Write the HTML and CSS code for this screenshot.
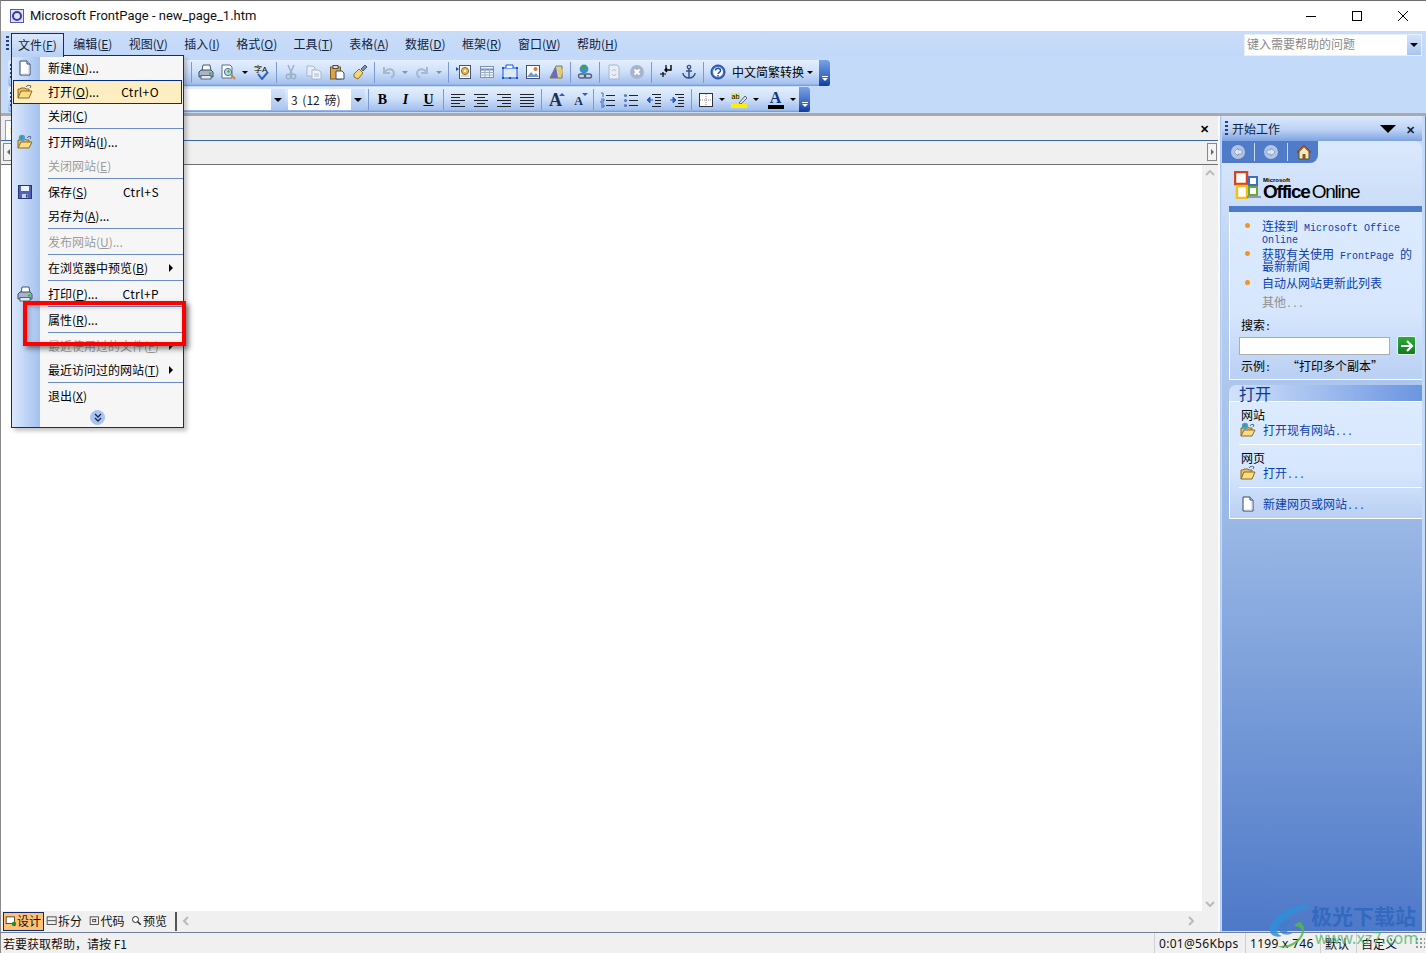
FILE: index.html
```html
<!DOCTYPE html>
<html lang="zh">
<head>
<meta charset="utf-8">
<title>Microsoft FrontPage</title>
<link rel="stylesheet" href="styles.css">
</head>
<body>
<svg class="sprite" xmlns="http://www.w3.org/2000/svg">
  <symbol id="i-doc" viewBox="0 0 16 16"><path d="M3 1h7l3 3v11H3z" fill="#fff" stroke="#34486a"/><path d="M10 1v3h3" fill="#dfe8f5" stroke="#34486a"/><path d="M12 5v9H5" fill="none" stroke="#c5cfe0"/></symbol>
  <symbol id="i-folder" viewBox="0 0 16 16"><path d="M1 14V5h2l1-1h4l1 1h3v2" fill="#e9bd62" stroke="#8c6a24"/><path d="M1 14l3-7h11l-3 7z" fill="#fbdc85" stroke="#8c6a24"/><path d="M9 3c1-2 3-2 5-1l-1 2" fill="none" stroke="#4b6690"/></symbol>
  <symbol id="i-webfolder" viewBox="0 0 16 16"><path d="M1 14V6h2l1-1h4l1 1h3v2" fill="#e9bd62" stroke="#8c6a24"/><path d="M1 14l3-6h11l-3 6z" fill="#fbdc85" stroke="#8c6a24"/><circle cx="5" cy="4" r="3.2" fill="#4f9ad8"/><path d="M3 3l2-1 1 2-2 1z" fill="#3da63c"/><path d="M10 4c1-2 3-2 4-1l-1 2" fill="none" stroke="#4b6690"/></symbol>
  <symbol id="i-floppy" viewBox="0 0 16 16"><rect x="1.5" y="1.5" width="13" height="13" fill="#4d63b5" stroke="#26366f"/><rect x="4" y="2" width="8" height="5" fill="#eef3fb"/><rect x="5" y="10" width="6" height="4" fill="#c8d1e6"/><rect x="9" y="10.5" width="1.5" height="3" fill="#26366f"/></symbol>
  <symbol id="i-print" viewBox="0 0 16 16"><path d="M5 1h7l1 6H4z" fill="#fff" stroke="#46566c"/><path d="M1 8l2-2h10l2 2v5H1z" fill="#a7b5c8" stroke="#3f4f66"/><rect x="3" y="11.500" width="10" height="3.500" fill="#e4eaf3" stroke="#3f4f66" stroke-width=".8"/><rect x="11" y="8.500" width="2.500" height="2" fill="#18c32a"/></symbol>
  <symbol id="i-preview" viewBox="0 0 16 16"><path d="M1 1h8l2 2v11H1z" fill="#fff" stroke="#53708f"/><circle cx="7" cy="8" r="3.6" fill="#b7dceb" stroke="#4a6d88"/><path d="M6 7l2-1 1 2-2 1z" fill="#3da63c"/><path d="M10 11l4 4" stroke="#cf8a2c" stroke-width="2.4"/></symbol>
  <symbol id="i-spell" viewBox="0 0 16 16"><text x="0" y="8" font-size="8" font-family="Noto Sans CJK SC,sans-serif" fill="#000">字</text><text x="8" y="8" font-size="8" font-family="Liberation Sans,sans-serif" fill="#000">A</text><path d="M4 10l4 5 6-7" fill="none" stroke="#2f62c0" stroke-width="2"/></symbol>
  <symbol id="i-cut" viewBox="0 0 16 16"><path d="M5 1l4 9M11 1L7 10" stroke="#9fafc8" stroke-width="1.5" fill="none"/><circle cx="5.5" cy="12.5" r="2.2" fill="none" stroke="#9fafc8" stroke-width="1.4"/><circle cx="10.5" cy="12.5" r="2.2" fill="none" stroke="#9fafc8" stroke-width="1.4"/></symbol>
  <symbol id="i-copy" viewBox="0 0 16 16"><path d="M1 2h6l2 2v8H1z" fill="#e6edf8" stroke="#a8b6cc"/><path d="M6 6h6l3 2v7H6z" fill="#eff4fb" stroke="#a8b6cc"/><path d="M8 10h5M8 12h5" stroke="#a8b6cc"/></symbol>
  <symbol id="i-paste" viewBox="0 0 16 16"><rect x="1.5" y="3" width="10" height="12" fill="#d7a64c" stroke="#7c5a1c"/><rect x="4" y="1.5" width="5" height="3" fill="#e8e2c8" stroke="#4b4b4b"/><path d="M7 7h6l2 2v6H7z" fill="#fff" stroke="#3a4a66"/></symbol>
  <symbol id="i-brush" viewBox="0 0 16 16"><path d="M2 10l5-5 4 4-5 6-4-2z" fill="#f2d678" stroke="#8b7228"/><path d="M9 5l4-4 2 2-4 4z" fill="#7d8fb7" stroke="#46557a"/></symbol>
  <symbol id="i-undo" viewBox="0 0 16 16"><path d="M3 3v6h6M3 9c3-5 9-5 10 0 0 2-1 4-3 5" fill="none" stroke="#a9b8d0" stroke-width="2"/></symbol>
  <symbol id="i-redo" viewBox="0 0 16 16"><path d="M13 3v6H7M13 9C10 4 4 4 3 9c0 2 1 4 3 5" fill="none" stroke="#a9b8d0" stroke-width="2"/></symbol>
  <symbol id="i-webcomp" viewBox="0 0 16 16"><path d="M0 3l3 2-3 2z" fill="#1c4fb8"/><rect x="3.5" y="1.5" width="11" height="13" fill="#fff" stroke="#44546e"/><circle cx="9" cy="7" r="3.6" fill="#e9b44a" stroke="#8c6a24"/><circle cx="9" cy="7" r="1.2" fill="#fff"/><path d="M5 12h8" stroke="#9fb0c8"/></symbol>
  <symbol id="i-table" viewBox="0 0 16 16"><rect x="1.5" y="2.5" width="13" height="11" fill="#f2f6fd" stroke="#7d8fb0"/><path d="M1.5 5.5h13" stroke="#7d8fb0" stroke-width="2"/><path d="M1.5 8.5h13M1.5 11h13M6 5v8M10.500 5v8" stroke="#9eaec8"/></symbol>
  <symbol id="i-frame" viewBox="0 0 16 16"><rect x="1" y="4" width="14" height="10" fill="#dde8f8" stroke="#1552e0"/><path d="M4 4V1h7v3" fill="#fff" stroke="#1552e0"/><path d="M0 3h2v2H0zM14 3h2v2h-2zM0 13h2v2H0zM14 13h2v2h-2zM7 13h2v2H7z" fill="#1552e0"/></symbol>
  <symbol id="i-picture" viewBox="0 0 16 16"><rect x="1.500" y="1.500" width="13" height="13" fill="#fff" stroke="#44546e"/><path d="M2 13l4-5 3 3 2-2 3 4z" fill="#7297c8"/><circle cx="10.500" cy="5" r="2" fill="#e2703a"/></symbol>
  <symbol id="i-wordart" viewBox="0 0 16 16"><path d="M2 14L8 2h6v12z" fill="#d9d3a8" stroke="#7c7750"/><path d="M2 14L8 3l2 11z" fill="#6a6ac4"/><path d="M11 4l4 2-2 6-3-1z" fill="#e6ca63"/></symbol>
  <symbol id="i-link" viewBox="0 0 16 16"><circle cx="7" cy="5" r="4.400" fill="#3d8ed0"/><path d="M4 3l3-2 2 3-3 2z" fill="#3da63c"/><rect x="1.500" y="10" width="7" height="4" rx="2" fill="none" stroke="#53637a" stroke-width="1.400"/><rect x="7.500" y="10" width="7" height="4" rx="2" fill="none" stroke="#53637a" stroke-width="1.400"/></symbol>
  <symbol id="i-refresh" viewBox="0 0 16 16"><path d="M3 1h8l2 2v12H3z" fill="#e8eef8" stroke="#a8b6cc"/><path d="M6 7c1-2 3-2 4 0M10 10c-1 2-3 2-4 0" fill="none" stroke="#a8b6cc"/></symbol>
  <symbol id="i-stop" viewBox="0 0 16 16"><circle cx="8" cy="8" r="7" fill="#a7b4cc"/><path d="M5.500 5.500l5 5M10.500 5.500l-5 5" stroke="#fff" stroke-width="2"/></symbol>
  <symbol id="i-mark" viewBox="0 0 16 16"><path d="M13 1v5H7M9 4L7 6l2 2" fill="none" stroke="#000" stroke-width="1.400"/><path d="M2 10h6M5 8v5M8 1v4" stroke="#000" stroke-width="1.200"/></symbol>
  <symbol id="i-anchor" viewBox="0 0 16 16"><circle cx="8" cy="3" r="1.700" fill="none" stroke="#34527e" stroke-width="1.300"/><path d="M8 5v9M5 7h6M2 9c0 3 3 5 6 5s6-2 6-5" fill="none" stroke="#34527e" stroke-width="1.500"/></symbol>
  <symbol id="i-help" viewBox="0 0 16 16"><circle cx="8" cy="8" r="7" fill="#3a6fd0" stroke="#24418c"/><circle cx="8" cy="8" r="5" fill="#fff"/><path d="M5.500 6.500c0-3 5-3 5 0 0 2-2.500 2-2.500 3.500" fill="none" stroke="#2350ad" stroke-width="1.500"/><rect x="7.200" y="11" width="1.600" height="1.600" fill="#2350ad"/></symbol>
  <symbol id="i-al" viewBox="0 0 16 16"><path d="M1 2.500h14M1 5.500h9M1 8.500h14M1 11.500h9M1 14.500h14" stroke="#222"/></symbol>
  <symbol id="i-ac" viewBox="0 0 16 16"><path d="M1 2.500h14M4 5.500h8M1 8.500h14M4 11.500h8M1 14.500h14" stroke="#222"/></symbol>
  <symbol id="i-ar" viewBox="0 0 16 16"><path d="M1 2.500h14M6 5.500h9M1 8.500h14M6 11.500h9M1 14.500h14" stroke="#222"/></symbol>
  <symbol id="i-aj" viewBox="0 0 16 16"><path d="M1 2.500h14M1 5.500h14M1 8.500h14M1 11.500h14M1 14.500h14" stroke="#222"/></symbol>
  <symbol id="i-ol" viewBox="0 0 16 16"><path d="M1 1h2v4M1 7h3v2H1v2h3M1 13h3v2H1" fill="none" stroke="#2a5cc4" stroke-width=".9"/><path d="M6 3.500h9M6 8.500h9M6 13.500h9" stroke="#222"/></symbol>
  <symbol id="i-ul" viewBox="0 0 16 16"><circle cx="2.500" cy="3.500" r="1.600" fill="#5a7bb8"/><circle cx="2.500" cy="8.500" r="1.600" fill="#5a7bb8"/><circle cx="2.500" cy="13.500" r="1.600" fill="#5a7bb8"/><path d="M6 3.500h9M6 8.500h9M6 13.500h9" stroke="#222"/></symbol>
  <symbol id="i-outdent" viewBox="0 0 16 16"><path d="M6 2.500h9M9 5.500h6M9 8.500h6M9 11.500h6M6 14.500h9" stroke="#222"/><path d="M7 8H2M4 5L1 8l3 3z" fill="#2a5cc4" stroke="#2a5cc4"/></symbol>
  <symbol id="i-indent" viewBox="0 0 16 16"><path d="M6 2.500h9M9 5.500h6M9 8.500h6M9 11.500h6M6 14.500h9" stroke="#222"/><path d="M1 8h5M4 5l3 3-3 3z" fill="#2a5cc4" stroke="#2a5cc4"/></symbol>
  <symbol id="i-border" viewBox="0 0 16 16"><rect x="1.500" y="1.500" width="13" height="13" fill="#fff" stroke="#333"/><path d="M8 2v12M2 8h12" stroke="#888" stroke-dasharray="1 1"/></symbol>
  <symbol id="i-hl" viewBox="0 0 16 16"><rect x="0" y="1" width="9" height="7" fill="#e7e561"/><text x=".5" y="7" font-size="7" font-family="Liberation Sans,sans-serif" fill="#000">ab</text><path d="M8 11l6-7 2 2-6 6z" fill="#dfe7f2" stroke="#53637a"/><rect x="0" y="12" width="16" height="4" fill="#ffee00"/></symbol>
  <symbol id="i-back" viewBox="0 0 16 16"><circle cx="8" cy="8" r="7" fill="#b3c4e4"/><path d="M8 4L4 8l4 4V10h4V6H8z" fill="#dce6f7" stroke="#7d90b8" stroke-width=".7"/></symbol>
  <symbol id="i-fwd" viewBox="0 0 16 16"><circle cx="8" cy="8" r="7" fill="#b3c4e4"/><path d="M8 4l4 4-4 4V10H4V6h4z" fill="#dce6f7" stroke="#7d90b8" stroke-width=".7"/></symbol>
  <symbol id="i-home" viewBox="0 0 16 16"><path d="M8 1L1 8h2v7h10V8h2z" fill="#f6e7b8" stroke="#6b4a20"/><path d="M8 1L1 8h2l5-5 5 5h2z" fill="#c2562a" stroke="#6b4a20" stroke-width=".6"/><rect x="6.500" y="10" width="3" height="5" fill="#7c5a2c"/></symbol>
  <symbol id="i-design" viewBox="0 0 16 16"><rect x="1.500" y="2.500" width="11" height="9" fill="#fff" stroke="#222"/><circle cx="12" cy="12" r="3" fill="#2a8a2a"/></symbol>
  <symbol id="i-split" viewBox="0 0 16 16"><rect x="1.500" y="2.500" width="12" height="10" fill="none" stroke="#222"/><path d="M2 7.500h11" stroke="#222"/></symbol>
  <symbol id="i-code" viewBox="0 0 16 16"><rect x="1.500" y="2.500" width="11" height="10" fill="none" stroke="#222"/><rect x="5" y="6" width="4" height="3" fill="none" stroke="#222"/></symbol>
  <symbol id="i-view" viewBox="0 0 16 16"><circle cx="6" cy="6" r="4" fill="#fff" stroke="#222" stroke-width="1.300"/><path d="M9 9l4 4" stroke="#222" stroke-width="2"/></symbol>
</svg>

<div class="window">
  <header class="titlebar">
    <svg class="app-icon" viewBox="0 0 14 14"><rect width="14" height="14" fill="#5c55b8"/><rect x="1" y="1" width="12" height="12" fill="#dfe3f6"/><circle cx="7" cy="7" r="4" fill="none" stroke="#3c3a9c" stroke-width="2"/></svg>
    <span class="title-text">Microsoft FrontPage - new_page_1.htm</span>
    <div class="win-controls">
      <div class="win-btn"><svg width="10" height="10"><path d="M0 5.500h10" stroke="#000"/></svg></div>
      <div class="win-btn"><svg width="10" height="10"><rect x=".5" y=".5" width="9" height="9" fill="none" stroke="#000"/></svg></div>
      <div class="win-btn"><svg width="10" height="10"><path d="M0 0l10 10M10 0L0 10" stroke="#000"/></svg></div>
    </div>
  </header>

  <div class="menubar">
    <span class="grip"></span>
    <span class="menu-title active">文件(<u>F</u>)</span>
    <span class="menu-title">编辑(<u>E</u>)</span>
    <span class="menu-title">视图(<u>V</u>)</span>
    <span class="menu-title">插入(<u>I</u>)</span>
    <span class="menu-title">格式(<u>O</u>)</span>
    <span class="menu-title">工具(<u>T</u>)</span>
    <span class="menu-title">表格(<u>A</u>)</span>
    <span class="menu-title">数据(<u>D</u>)</span>
    <span class="menu-title">框架(<u>R</u>)</span>
    <span class="menu-title">窗口(<u>W</u>)</span>
    <span class="menu-title">帮助(<u>H</u>)</span>
    <div class="help-box"><span class="help-text">键入需要帮助的问题</span><span class="combo-arrow"><i class="tri"></i></span></div>
  </div>

  <div class="toolbars">
    <div class="toolbar tb-one">
      <span class="grip tb-grip"></span><span class="tb-spacer"></span>
      <span class="sep"></span>
      <span class="btn"><svg class="icon"><use href="#i-print"/></svg></span>
      <span class="btn"><svg class="icon"><use href="#i-preview"/></svg></span><span class="arrow"><i class="tri-s"></i></span>
      <span class="btn"><svg class="icon"><use href="#i-spell"/></svg></span>
      <span class="sep"></span>
      <span class="btn"><svg class="icon"><use href="#i-cut"/></svg></span>
      <span class="btn"><svg class="icon"><use href="#i-copy"/></svg></span>
      <span class="btn"><svg class="icon"><use href="#i-paste"/></svg></span>
      <span class="btn"><svg class="icon"><use href="#i-brush"/></svg></span>
      <span class="sep"></span>
      <span class="btn"><svg class="icon"><use href="#i-undo"/></svg></span><span class="arrow off"><i class="tri-s"></i></span>
      <span class="btn b24"><svg class="icon"><use href="#i-redo"/></svg></span><span class="arrow off"><i class="tri-s"></i></span>
      <span class="sep sep-w"></span>
      <span class="btn"><svg class="icon"><use href="#i-webcomp"/></svg></span>
      <span class="btn"><svg class="icon"><use href="#i-table"/></svg></span>
      <span class="btn"><svg class="icon"><use href="#i-frame"/></svg></span>
      <span class="btn"><svg class="icon"><use href="#i-picture"/></svg></span>
      <span class="btn"><svg class="icon"><use href="#i-wordart"/></svg></span>
      <span class="sep"></span>
      <span class="btn"><svg class="icon"><use href="#i-link"/></svg></span>
      <span class="sep"></span>
      <span class="btn"><svg class="icon"><use href="#i-refresh"/></svg></span>
      <span class="btn"><svg class="icon"><use href="#i-stop"/></svg></span>
      <span class="sep"></span>
      <span class="btn"><svg class="icon"><use href="#i-mark"/></svg></span>
      <span class="btn"><svg class="icon"><use href="#i-anchor"/></svg></span>
      <span class="sep"></span>
      <span class="btn"><svg class="icon"><use href="#i-help"/></svg></span>
      <span class="tb-label">中文简繁转换<i class="tri-s"></i></span>
      <span class="tb-end"><i class="end-mark"></i></span>
    </div>
    <div class="toolbar tb-two">
      <span class="grip tb-grip"></span>
      <span class="combo combo-font"><span class="combo-val"></span><span class="combo-arrow"><i class="tri"></i></span></span>
      <span class="combo combo-size"><span class="combo-val">3 (12 磅)</span><span class="combo-arrow"><i class="tri"></i></span></span>
      <span class="sep"></span>
      <span class="btn fmt bold">B</span>
      <span class="btn fmt ital">I</span>
      <span class="btn fmt under">U</span>
      <span class="sep"></span>
      <span class="btn"><svg class="icon"><use href="#i-al"/></svg></span>
      <span class="btn"><svg class="icon"><use href="#i-ac"/></svg></span>
      <span class="btn"><svg class="icon"><use href="#i-ar"/></svg></span>
      <span class="btn"><svg class="icon"><use href="#i-aj"/></svg></span>
      <span class="sep"></span>
      <span class="btn fmt grow">A<sup class="mini-up"></sup></span>
      <span class="btn fmt shrink">A<sup class="mini-down"></sup></span>
      <span class="sep"></span>
      <span class="btn"><svg class="icon"><use href="#i-ol"/></svg></span>
      <span class="btn"><svg class="icon"><use href="#i-ul"/></svg></span>
      <span class="btn"><svg class="icon"><use href="#i-outdent"/></svg></span>
      <span class="btn"><svg class="icon"><use href="#i-indent"/></svg></span>
      <span class="sep"></span>
      <span class="btn"><svg class="icon"><use href="#i-border"/></svg></span><span class="arrow"><i class="tri-s"></i></span>
      <span class="btn b24"><svg class="icon"><use href="#i-hl"/></svg></span><span class="arrow"><i class="tri-s"></i></span>
      <span class="btn b25 colorbtn"><span class="color-a">A</span><i class="color-bar"></i></span><span class="arrow"><i class="tri-s"></i></span>
      <span class="tb-end tb-end-two"><i class="end-mark"></i></span>
    </div>
  </div>

  <main class="workspace">
    <section class="doc">
      <div class="doc-tabs">
        <span class="doc-tab">n</span>
        <span class="doc-close">✕</span>
      </div>
      <div class="doc-path">
        <span class="nav-box"><i class="tri-l"></i></span>
        <span class="nav-box nav-right"><i class="tri-r"></i></span>
      </div>
      <div class="editor">
        <div class="canvas"></div>
        <div class="vscroll"><svg width="10" height="6"><path d="M1 5l4-4 4 4" fill="none" stroke="#bbb" stroke-width="2"/></svg><svg width="10" height="6"><path d="M1 1l4 4 4-4" fill="none" stroke="#bbb" stroke-width="2"/></svg></div>
      </div>
      <div class="view-tabs">
        <span class="view-tab on"><svg class="icon vi"><use href="#i-design"/></svg>设计</span>
        <span class="view-tab"><svg class="icon vi"><use href="#i-split"/></svg>拆分</span>
        <span class="view-tab"><svg class="icon vi"><use href="#i-code"/></svg>代码</span>
        <span class="view-tab"><svg class="icon vi"><use href="#i-view"/></svg>预览</span>
        <span class="view-sep"></span>
        <div class="hscroll"><svg width="6" height="10"><path d="M5 1L1 5l4 4" fill="none" stroke="#bbb" stroke-width="2"/></svg><svg width="6" height="10"><path d="M1 1l4 4-4 4" fill="none" stroke="#bbb" stroke-width="2"/></svg></div>
      </div>
    </section>

    <aside class="pane">
      <div class="pane-head">
        <span class="pane-grip"></span>
        <span class="pane-title">开始工作</span>
        <i class="pane-tri"></i>
        <span class="pane-close">✕</span>
      </div>
      <div class="pane-body">
        <div class="pane-nav">
          <svg class="icon"><use href="#i-back"/></svg><i class="nav-sep"></i>
          <svg class="icon"><use href="#i-fwd"/></svg><i class="nav-sep"></i>
          <svg class="icon"><use href="#i-home"/></svg>
        </div>
        <div class="logo">
          <svg class="logo-mark" width="27" height="28" viewBox="0 0 27 28">
            <rect x="1" y="1" width="12" height="12" fill="#fff" stroke="#d9421c" stroke-width="2.500"/>
            <rect x="3" y="15" width="10" height="12" fill="#fff" stroke="#f0c020" stroke-width="2.500"/>
            <rect x="15" y="6" width="8" height="8" fill="#fff" stroke="#3a70c8" stroke-width="2"/>
            <rect x="15" y="16" width="8" height="8" fill="#fff" stroke="#6aa83a" stroke-width="2"/>
            <path d="M13 26h14" stroke="#555"/>
          </svg>
          <div class="logo-text"><span class="logo-ms">Microsoft</span><span class="logo-main"><b>Office</b>Online</span></div>
        </div>
        <div class="pane-bar"></div>
        <div class="box box-online">
          <ul class="links">
            <li>连接到<span class="mono"> Microsoft Office Online</span></li>
            <li>获取有关使用<span class="mono"> FrontPage </span>的最新新闻</li>
            <li class="single">自动从网站更新此列表</li>
            <li class="other">其他<span class="mono">...</span></li>
          </ul>
          <div class="search-label">搜索<span class="mono">:</span></div>
          <div class="search-row"><span class="search-input"></span><span class="go"><svg width="14" height="12" viewBox="0 0 14 12"><path d="M1 6h11M7 1l5 5-5 5" fill="none" stroke="#fff" stroke-width="2.200"/></svg></span></div>
          <div class="example">示例<span class="mono">:</span><span class="example-q">“打印多个副本”</span></div>
        </div>
        <div class="section-head">打开</div>
        <div class="box box-open">
          <div class="open-label">网站</div>
          <div class="open-link"><svg class="icon"><use href="#i-webfolder"/></svg><span>打开现有网站<span class="mono">...</span></span></div>
          <div class="open-div"></div>
          <div class="open-label">网页</div>
          <div class="open-link"><svg class="icon"><use href="#i-folder"/></svg><span>打开<span class="mono">...</span></span></div>
          <div class="open-div"></div>
          <div class="open-link open-new"><svg class="icon"><use href="#i-doc"/></svg><span>新建网页或网站<span class="mono">...</span></span></div>
        </div>
      </div>
    </aside>
  </main>

  <footer class="statusbar">
    <span class="st st-main">若要获取帮助，请按 F1</span>
    <span class="st st-speed">0:01@56Kbps</span>
    <span class="st st-size">1199 x 746</span>
    <span class="st st-def">默认</span>
    <span class="st st-cust">自定义</span>
    <span class="st-grip"></span>
  </footer>

  <nav class="file-menu">
    <div class="mi"><svg class="icon mi-icon"><use href="#i-doc"/></svg><span class="mi-label">新建(<u>N</u>)...</span></div>
    <div class="mi hot"><svg class="icon mi-icon"><use href="#i-folder"/></svg><span class="mi-label">打开(<u>O</u>)...</span><span class="mi-key">Ctrl+O</span></div>
    <div class="mi"><span class="mi-label">关闭(<u>C</u>)</span></div>
    <div class="msep"></div>
    <div class="mi"><svg class="icon mi-icon"><use href="#i-webfolder"/></svg><span class="mi-label">打开网站(<u>I</u>)...</span></div>
    <div class="mi off"><span class="mi-label">关闭网站(<u>E</u>)</span></div>
    <div class="msep"></div>
    <div class="mi"><svg class="icon mi-icon"><use href="#i-floppy"/></svg><span class="mi-label">保存(<u>S</u>)</span><span class="mi-key">Ctrl+S</span></div>
    <div class="mi"><span class="mi-label">另存为(<u>A</u>)...</span></div>
    <div class="msep"></div>
    <div class="mi off"><span class="mi-label">发布网站(<u>U</u>)...</span></div>
    <div class="msep"></div>
    <div class="mi"><span class="mi-label">在浏览器中预览(<u>B</u>)</span><i class="sub"></i></div>
    <div class="msep"></div>
    <div class="mi"><svg class="icon mi-icon"><use href="#i-print"/></svg><span class="mi-label">打印(<u>P</u>)...</span><span class="mi-key">Ctrl+P</span></div>
    <div class="msep"></div>
    <div class="mi"><span class="mi-label">属性(<u>R</u>)...</span></div>
    <div class="msep"></div>
    <div class="mi off"><span class="mi-label">最近使用过的文件(<u>F</u>)</span><i class="sub"></i></div>
    <div class="mi"><span class="mi-label">最近访问过的网站(<u>T</u>)</span><i class="sub"></i></div>
    <div class="msep"></div>
    <div class="mi"><span class="mi-label">退出(<u>X</u>)</span></div>
    <div class="mi-more"><span class="more-dot"><svg width="8" height="9" viewBox="0 0 8 9"><path d="M1 1l3 3 3-3M1 5l3 3 3-3" fill="none" stroke="#10285c" stroke-width="1.300"/></svg></span></div>
  </nav>

  <div class="red-box"></div>

  <div class="watermark">
    <svg class="wm-swirl" width="46" height="44" viewBox="0 0 46 44"><path d="M44 2C22 0 4 12 2 24c-1 8 6 10 12 8C6 30 8 22 16 16 24 9 34 6 44 2z" fill="#2f8fd8" opacity=".85"/><path d="M32 18c8 6 4 18-8 24-6 2-12 2-14 0 12 1 22-6 24-14 0-4-4-6-8-6 2-2 4-4 6-4z" fill="#56b848" opacity=".85"/><path d="M12 24c2-6 10-10 16-8-6 0-10 4-10 8s4 6 8 4c-4 4-16 4-14-4z" fill="#3a7fc8" opacity=".75"/></svg>
    <span class="wm-cn">极光下载站</span>
    <span class="wm-en">www.xz7.com</span>
  </div>
</div>
</body>
</html>
```

FILE: styles.css
```css
* { box-sizing: border-box; }
html, body { margin: 0; padding: 0; }
body {
  width: 1426px;
  height: 953px;
  overflow: hidden;
  font: 12px/16px "Noto Sans CJK SC", "Noto Sans", sans-serif;
  color: #000;
}
u { text-underline-offset: 1px; }
.sprite { position: absolute; width: 0; height: 0; }
.icon { width: 16px; height: 16px; display: block; flex: none; }

.window {
  position: relative;
  width: 1426px;
  height: 953px;
  display: flex;
  flex-direction: column;
  border-top: 1px solid #6d6d6d;
  border-left: 1px solid #8a8a8a;
  background: #f0f0f0;
}

/* title */
.titlebar { height: 30px; background: #fff; display: flex; align-items: center; padding-left: 9px; flex: none; }
.app-icon { width: 14px; height: 14px; margin-right: 6px; }
.title-text { font: 13px/16px Roboto, sans-serif; color: #111; white-space: nowrap; }
.win-controls { margin-left: auto; display: flex; }
.win-btn { width: 46px; height: 30px; display: flex; align-items: center; justify-content: center; }
.win-btn svg { display: block; }

/* menu bar */
.menubar { height: 26px; flex: none; display: flex; align-items: center; padding-left: 5px; background: linear-gradient(#c9ddf9, #c2d8f8); color: #10233f; }
.grip { width: 3px; height: 16px; margin-right: 2px; flex: none; background: repeating-linear-gradient(#27417c 0 2px, transparent 2px 4px); }
.menu-title { padding: 0 8.200px; height: 22px; line-height: 22px; white-space: nowrap; flex: none; }
.menu-title.active { align-self: flex-end; height: 24px; line-height: 21px; background: linear-gradient(#dbe8fb, #b8d0f3); border: 1px solid #002d96; border-bottom: 0; padding: 0 6px; width: 53px; margin-right: 1px; position: relative; z-index: 3; }
.help-box { margin-left: auto; margin-right: 4px; width: 178px; height: 22px; background: #fff; display: flex; border: 1px solid #e7effc; margin-top: 2px; }
.help-text { flex: 1; color: #8a8a8a; padding-left: 2px; line-height: 17px; }
.combo-arrow { width: 14px; background: linear-gradient(#d3e3fb, #a9c5ef); display: flex; align-items: center; justify-content: center; flex: none; }
.tri { width: 0; height: 0; border: 4px solid transparent; border-top: 4px solid #000; border-bottom: 0; display: block; }
.tri-s { width: 0; height: 0; border: 3px solid transparent; border-top: 3px solid #000; border-bottom: 0; display: inline-block; }

/* toolbars */
.toolbars { height: 56px; flex: none; background: #c3daf9; padding: 3px 0 0 7px; display: flex; flex-direction: column; gap: 1px; }
.toolbar { height: 26px; display: flex; align-items: center; border-radius: 3px 0 0 3px; background: linear-gradient(#e4effe, #cfe0f9 45%, #a3c0ee 92%, #6e94d6); flex: none; }
.tb-one { width: 822px; padding-bottom: 2px; }
.tb-two { width: 802px; height: 25px; }
.tb-grip { margin: 0 5px 0 2px; }
.tb-spacer { width: 170px; flex: none; }
.sep { width: 6px; height: 21px; flex: none; background: linear-gradient(#7c9ad2, #7c9ad2) center / 1px 100% no-repeat; }
.sep-w { width: 8px; }
.btn { width: 23px; height: 22px; flex: none; display: flex; align-items: center; justify-content: center; }
.b24 { width: 24px; }
.b25 { width: 25px; margin-left: 2px; }
.arrow { width: 10px; height: 22px; flex: none; display: flex; align-items: center; justify-content: center; }
.arrow.off { opacity: .35; }
.tb-label { width: 90px; padding-left: 3px; flex: none; display: flex; align-items: center; gap: 3px; white-space: nowrap; }
.tb-end { margin: 0 0 0 auto; width: 11px; height: 26px; flex: none; border-radius: 0 3px 3px 0; background: linear-gradient(#7ba2e4, #3d6cc8 60%, #0f3c9e); display: flex; align-items: flex-end; justify-content: center; padding-bottom: 5px; }
.tb-one .tb-end { margin-bottom: -2px; }
.tb-end-two { height: 25px; }
.end-mark { width: 6px; height: 5px; display: block; background: linear-gradient(#fff, #fff) top / 6px 1px no-repeat; position: relative; }
.end-mark::after { content: ""; position: absolute; left: 0; top: 2px; border: 3px solid transparent; border-top-color: #fff; border-bottom: 0; }

.combo { height: 21px; background: #fff; display: flex; flex: none; }
.combo-font { width: 265px; margin-left: 2px; }
.combo-size { width: 77px; margin-left: 3px; }
.combo-val { flex: 1; line-height: 21px; padding-left: 3px; white-space: nowrap; color: #222; word-spacing: 2px; }
.fmt { font-family: "Liberation Serif", serif; color: #000; }
.bold { font-weight: 700; font-size: 14px; }
.ital { font-style: italic; font-weight: 700; font-size: 14px; }
.under { font-weight: 700; font-size: 14px; text-decoration: underline; }
.grow { font-size: 18px; font-weight: 700; color: #1b2f52; position: relative; }
.shrink { font-size: 12px; font-weight: 700; color: #1b2f52; position: relative; padding-top: 3px; }
.mini-up, .mini-down { position: absolute; right: 2px; top: 4px; width: 0; height: 0; border: 3px solid transparent; border-top: 0; border-bottom: 3px solid #2a5cc4; }
.mini-down { border-bottom: 0; border-top: 3px solid #2a5cc4; }
.colorbtn { flex-direction: column; }
.color-a { font: 700 16px/13px "Liberation Serif", serif; color: #11367f; }
.color-bar { width: 16px; height: 4px; background: #000; display: block; margin-top: 1px; }

/* workspace */
.workspace { flex: 1; min-height: 0; display: flex; border-top: 3px solid #a9a9a9; }
.doc { width: 1219px; flex: none; display: flex; flex-direction: column; background: #f0f0f0; border-right: 2px solid #fafafa; }
.doc-tabs { height: 25px; flex: none; background: #eee; border-bottom: 1px solid #3a66ad; display: flex; align-items: flex-end; justify-content: space-between; padding: 0 9px 0 4px; }
.doc-tab { width: 12px; height: 20px; background: #fff; border: 1px solid #8a9cc0; border-bottom: 0; font: 700 10px/18px "Liberation Serif", serif; text-align: right; overflow: hidden; }
.doc-close { align-self: center; font-size: 11px; font-weight: 700; }
.doc-path { height: 24px; flex: none; background: #f0f0f0; border-bottom: 1px solid #707070; display: flex; justify-content: space-between; align-items: center; padding: 0 1px 2px 2px; }
.nav-box { width: 10px; height: 18px; border: 1px solid #888; background: #f3f3f3; display: flex; align-items: center; justify-content: center; }
.tri-l { border: 3px solid transparent; border-right: 3px solid #666; border-left: 0; }
.tri-r { border: 3px solid transparent; border-left: 3px solid #666; border-right: 0; }
.editor { flex: 1; min-height: 0; display: flex; }
.canvas { flex: 1; background: #fff; }
.vscroll { width: 16px; background: #f0f0f0; display: flex; flex-direction: column; justify-content: space-between; align-items: center; padding: 5px 0 4px; }
.vscroll svg, .hscroll svg { display: block; }
.view-tabs { height: 21px; flex: none; display: flex; align-items: center; padding: 0 0 1px 2px; background: #f0f0f0; }
.view-tab { display: flex; align-items: center; height: 19px; margin-right: 6.500px; font-size: 12px; color: #111; white-space: nowrap; flex: none; }
.view-tab .vi { width: 12px; height: 12px; }
.view-tab.on { width: 41px; margin-right: 2px; background: #ffc274; border: 1px solid #12296f; padding-left: 1px; }
.view-sep { width: 2px; height: 19px; margin-left: 1px; background: #555; flex: none; }
.hscroll { flex: 1; display: flex; justify-content: space-between; align-items: center; padding: 0 24px 0 6px; }

/* task pane */
.pane { flex: 1; display: flex; flex-direction: column; padding: 0 3px 1px 2px; background: linear-gradient(90deg, #aecbf4 0 1px, #c3daf9 1px); border-right: 1px solid #6f7f99; }
.pane-head { height: 25px; flex: none; display: flex; align-items: center; background: linear-gradient(#dce9fd, #bcd2f4 55%, #7ea3e2); padding-left: 3px; color: #10233f; }
.pane-grip { width: 3px; height: 16px; flex: none; background: repeating-linear-gradient(#27417c 0 2px, transparent 2px 4px); }
.pane-title { margin-left: 4px; flex: 1; }
.pane-tri { width: 0; height: 0; border: 8px solid transparent; border-top: 8px solid #000; border-bottom: 0; margin-right: 10px; }
.pane-close { font-size: 11px; font-weight: 700; width: 14px; margin-right: 2px; }
.pane-body { flex: 1; min-height: 0; border-radius: 0 8px 0 0; background: linear-gradient(#dbe9fd, #bdd3f4 15%, #9ab8e6 48%, #4e79c8); display: flex; flex-direction: column; }
.pane-nav { width: 96px; height: 22px; flex: none; background: #4f7bc8; border-radius: 0 0 8px 0; display: flex; align-items: center; padding-left: 8px; }
.nav-sep { width: 1px; height: 18px; background: #cddcf5; margin: 0 8px; display: block; }
.logo { display: flex; height: 32px; margin: 8px 0 0 12px; flex: none; color: #000; }
.logo-mark { flex: none; }
.logo-text { display: flex; flex-direction: column; font-family: "Liberation Sans", sans-serif; margin-left: 2px; padding-top: 7px; }
.logo-ms { font-size: 6px; line-height: 5px; font-weight: 700; }
.logo-main { font-size: 19px; line-height: 18px; letter-spacing: -1.200px; white-space: nowrap; }
.logo-main b { margin-right: 2px; }
.pane-bar { height: 6px; margin: 3px 0 0 7px; background: #4f7bc8; flex: none; }
.box { margin-left: 7px; border-left: 1px solid #fff; border-bottom: 1px solid #fff; background: linear-gradient(#dcebff, #d6e6fd 60%, #b9d0f3); flex: none; }
.box-online { height: 168px; padding-top: 8px; }
.links { list-style: none; margin: 0; padding: 0 8px 0 32px; color: #0b3fb0; line-height: 12px; }
.links li { position: relative; margin-bottom: 4px; }
.links li::before { content: ""; position: absolute; left: -17px; top: 3px; width: 5px; height: 5px; border-radius: 50%; background: #f7941d; }
.links .single { margin-top: -1px; line-height: 16px; }
.links .single::before { top: 5px; }
.links .other { color: #8f8f8f; margin-top: -1px; line-height: 16px; }
.links .other::before { display: none; }
.mono { font-family: "Liberation Mono", monospace; font-size: 10px; line-height: 0; white-space: pre-wrap; }
.search-label { margin: 7px 0 0 11px; line-height: 16px; }
.search-row { display: flex; align-items: center; margin: 3px 0 0 9px; }
.search-input { width: 151px; height: 18px; background: #fff; border: 1px solid #adadad; flex: none; }
.go { width: 19px; height: 19px; margin-left: 7px; background: linear-gradient(#2cab3a, #137a22); border: 1px solid #e7f2e9; border-radius: 2px; display: flex; align-items: center; justify-content: center; }
.example { margin: 3px 0 0 11px; white-space: nowrap; line-height: 16px; }
.example-q { margin-left: 16px; }
.section-head { height: 17px; margin: 5px 0 0 7px; padding-left: 10px; flex: none; font-size: 16px; line-height: 17px; color: #0b3a8d; border-radius: 7px 0 0 0; background: linear-gradient(90deg, #d2e2fb, #6a95e0); border-bottom: 1px solid #fff; }
.box-open { height: 117px; padding-top: 5px; }
.open-label { margin-left: 11px; line-height: 15px; height: 15px; }
.open-link { margin-left: 10px; display: flex; align-items: center; color: #0b3fb0; gap: 7px; height: 15px; white-space: nowrap; }
.open-div { height: 1px; background: #fff; margin: 7px 0 5px 9px; }
.open-new { margin-top: 8px; }

/* status bar */
.statusbar { height: 21px; flex: none; display: flex; align-items: center; background: #f0f0f0; border-top: 1px solid #6f8098; position: relative; }
.st { height: 20px; line-height: 21px; white-space: nowrap; color: #111; border-left: 1px solid #d0d0d0; padding-left: 4px; flex: none; }
.st-main { width: 1153px; border-left: 0; padding-left: 2px; }
.st-speed { width: 91px; font-family: "Noto Sans", sans-serif; letter-spacing: .3px; }
.st-size { width: 75px; font-family: "Noto Sans", sans-serif; letter-spacing: .3px; }
.st-def { width: 36px; }
.st-cust { width: 44px; }
.st-grip { margin-left: auto; width: 10px; height: 12px; margin-right: 1px; background: radial-gradient(circle, #9a9a9a 1px, transparent 1.200px) 0 0 / 4px 4px; }

/* file menu overlay */
.file-menu { position: absolute; left: 10px; top: 54px; width: 173px; height: 373px; border: 1px solid #002d96; background: linear-gradient(90deg, #dbe8fd 0, #a4c1ee 28px, #f6f6f6 28px); box-shadow: 3px 3px 4px rgba(60, 60, 60, .3); z-index: 2; }
.mi { height: 24px; display: flex; align-items: center; position: relative; padding-left: 36px; white-space: nowrap; }
.mi-label { flex: 1; }
.mi-icon { position: absolute; left: 5px; top: 4px; }
.mi-key { margin-right: 24px; font-size: 12px; letter-spacing: .4px; }
.mi.off { color: #9c9c9c; }
.mi.hot { margin: 0 1px; padding-left: 34px; background: #ffeec2; border: 1px solid #002d96; }
.mi.hot .mi-key { margin-right: 22px; }
.mi.hot .mi-icon { left: 3px; top: 3px; }
.msep { height: 2px; margin-left: 36px; background: linear-gradient(#6a8ccb, #6a8ccb) top / 100% 1px no-repeat; }
.sub { width: 0; height: 0; border: 4px solid transparent; border-left: 4px solid #000; border-right: 0; margin-right: 10px; }
.mi-more { height: 19px; display: flex; align-items: center; justify-content: center; }
.more-dot { width: 15px; height: 15px; border-radius: 50%; background: #a9c4ef; display: flex; align-items: center; justify-content: center; }

.red-box { position: absolute; left: 22px; top: 300px; width: 163px; height: 45px; border: 4px solid #f00; box-shadow: 3px 3px 5px rgba(40, 40, 40, .55), inset 2px 2px 4px rgba(40, 40, 40, .3); z-index: 4; }

.watermark { position: absolute; left: 1266px; top: 902px; width: 159px; height: 50px; z-index: 5; overflow: hidden; }
.wm-swirl { position: absolute; left: 1px; top: 1px; }
.wm-cn { position: absolute; left: 44px; top: 0; font-size: 21px; line-height: 25px; font-weight: 700; color: #2a66bf; white-space: nowrap; opacity: .8; }
.wm-en { position: absolute; left: 48px; top: 25px; font: 16px/20px "Noto Sans", sans-serif; color: #3fb46a; white-space: nowrap; opacity: .75; }
```
